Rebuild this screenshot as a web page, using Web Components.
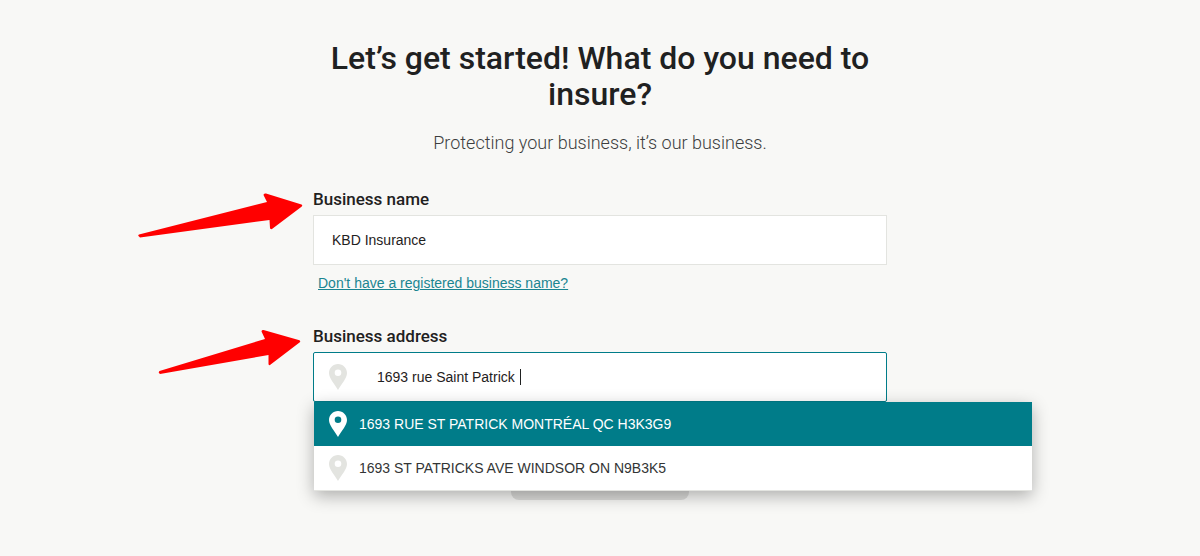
<!DOCTYPE html>
<html lang="en">
<head>
<meta charset="utf-8">
<meta name="viewport" content="width=device-width, initial-scale=1">
<title>Get started</title>
<style>
  body {
    margin: 0;
    background: #f8f8f6;
    color: #1f2121;
    font-family: Roboto, sans-serif;
  }
</style>
</head>
<body>
<quote-page></quote-page>

<script>
const pinTemplate = document.createElement('template');
pinTemplate.innerHTML = `
  <style>
    :host { display: block; flex: none; width: 18px; height: 26px; color: #e3e4e0; }
    svg { display: block; width: 100%; height: 100%; }
  </style>
  <svg viewBox="0 0 18 26" aria-hidden="true">
    <path fill="currentColor" fill-rule="evenodd" d="M9 0C4 0 0 4 0 9c0 5.500 5.500 10.500 9 17 3.500-6.500 9-11.500 9-17 0-5-4-9-9-9zm0 5.500a3.300 3.300 0 1 1 0 6.600 3.300 3.300 0 0 1 0-6.600z"/>
  </svg>
`;

class MapPin extends HTMLElement {
    constructor() {
        super();
        this.attachShadow({ mode: 'open' });
        this.shadowRoot.appendChild(pinTemplate.content.cloneNode(true));
    }
}

// red arrow that points at a field's label
class PointerArrow extends HTMLElement {
    static observedAttributes = ['shape'];

    shapes = {
        name: 'M2 45.500Q0.500 44.500 2 43.500L130 11 126.500 4Q126.500 2 129 2.500L164.500 13.500Q166 14.500 164.500 15.800L135 38Q133 38.500 133 37L132.500 29 3 46.500Z',
        address: 'M22.500 45.500Q21 44.500 22.500 43L128 11 124.500 3.500Q124.500 1.500 126.500 2L162.500 12.200Q164 13.500 162.500 14.500L133 37Q131.500 37.500 131.500 36L131.500 27 23 46Z'
    };

    constructor() {
        super();
        this.attachShadow({ mode: 'open' });
    }

    attributeChangedCallback() {
        this.shadowRoot.innerHTML = `
          <style>
            :host { display: block; width: 166px; height: 48px; }
            svg { display: block; }
          </style>
          <svg width="166" height="48" viewBox="0 0 166 48" aria-hidden="true">
            <path fill="#ff0000" d="${this.shapes[this.getAttribute('shape')]}"/>
          </svg>
        `;
    }
}

const fieldTemplate = document.createElement('template');
fieldTemplate.innerHTML = `
  <style>
    :host { display: block; position: relative; }
    label { display: block; font-size: 17px; font-weight: 500; line-height: 20px; margin-bottom: 6px; }
    .box {
      display: flex;
      align-items: center;
      box-sizing: border-box;
      height: 50px;
      padding: 0 18px;
      border: 1px solid #e3e4e0;
      background: #fff;
    }
    input {
      flex: 1;
      min-width: 0;
      padding: 0;
      border: 0;
      outline: 0;
      background: none;
      color: #1f2121;
      font: 14px/20px "Liberation Sans", Arial, sans-serif;
    }
    .caret { display: none; width: 1px; height: 16px; background: #1f2121; }
    :host([active]) .box { border-color: #007c89; border-radius: 2px; padding: 0 15px; }
    :host([active]) input { flex: none; field-sizing: content; margin-left: 30px; }
    :host([active]) .caret { display: block; margin-left: 5px; }
    pointer-arrow { position: absolute; top: 2px; right: calc(100% + 10px); }
    .menu { position: absolute; top: 100%; left: 1px; width: 125%; z-index: 1; }
  </style>
  <label for="field"></label>
  <div class="box">
    <slot name="icon"></slot>
    <input id="field" type="text" autocomplete="off">
    <span class="caret"></span>
  </div>
  <div class="menu"><slot name="menu"></slot></div>
  <pointer-arrow></pointer-arrow>
`;

class FormField extends HTMLElement {
    constructor() {
        super();
        this.attachShadow({ mode: 'open' });
        this.shadowRoot.appendChild(fieldTemplate.content.cloneNode(true));
    }

    connectedCallback() {
        this.shadowRoot.querySelector('label').textContent = this.getAttribute('label');
        this.shadowRoot.querySelector('input').value = this.getAttribute('value');
        this.shadowRoot.querySelector('pointer-arrow').setAttribute('shape', this.getAttribute('arrow'));
    }
}

const listTemplate = document.createElement('template');
listTemplate.innerHTML = `
  <style>
    :host {
      display: block;
      background: #fff;
      border-bottom: 1px solid #e3e4e0;
      box-shadow: 0 5px 16px rgba(0, 0, 0, 0.3);
    }
    button {
      display: flex;
      align-items: center;
      gap: 12px;
      width: 100%;
      height: 44px;
      padding: 0 15px;
      border: 0;
      background: #fff;
      color: #333535;
      font: 14px/20px "Liberation Sans", Arial, sans-serif;
      text-align: left;
    }
    button.selected { background: #007c89; color: #fff; }
    button.selected map-pin { color: #fff; }
  </style>
`;

class AddressList extends HTMLElement {
    addresses = [
        '1693 RUE ST PATRICK MONTRÉAL QC H3K3G9',
        '1693 ST PATRICKS AVE WINDSOR ON N9B3K5'
    ];

    constructor() {
        super();
        this.attachShadow({ mode: 'open' });
        this.shadowRoot.appendChild(listTemplate.content.cloneNode(true));
    }

    connectedCallback() {
        this.addresses.forEach((address, i) => {
            const item = document.createElement('button');
            item.type = 'button';
            item.append(document.createElement('map-pin'), address);
            item.classList.toggle('selected', i === 0);
            item.addEventListener('mouseenter', () => this.select(item));
            this.shadowRoot.appendChild(item);
        });
    }

    select(item) {
        this.shadowRoot.querySelectorAll('button').forEach(b => b.classList.toggle('selected', b === item));
    }
}

const pageTemplate = document.createElement('template');
pageTemplate.innerHTML = `
  <style>
    :host { display: block; padding: 40px 16px 56px; }
    main { display: flex; flex-direction: column; max-width: 574px; margin: 0 auto; }
    h1 { margin: 0; font-size: 32px; font-weight: 500; line-height: 36px; text-align: center; }
    p { margin: 20px 0 35px; color: #3c3e3e; font-size: 18px; font-weight: 300; line-height: 22px; text-align: center; }
    a {
      align-self: flex-start;
      margin: 8px 0 33px 5px;
      color: #1a8591;
      font: 14px/20px "Liberation Sans", Arial, sans-serif;
    }
    .submit {
      align-self: center;
      width: 178px;
      height: 48px;
      margin-top: 50px;
      border: 0;
      border-radius: 8px;
      background: #dcdcda;
    }
  </style>
  <main>
    <h1>Let’s get started! What do you need to insure?</h1>
    <p>Protecting your business, it’s our business.</p>
    <form-field label="Business name" value="KBD Insurance" arrow="name"></form-field>
    <a href="#">Don't have a registered business name?</a>
    <form-field label="Business address" value="1693 rue Saint Patrick" arrow="address" active>
      <map-pin slot="icon"></map-pin>
      <address-list slot="menu"></address-list>
    </form-field>
    <button class="submit" type="button" aria-label="Continue" disabled></button>
  </main>
`;

class QuotePage extends HTMLElement {
    constructor() {
        super();
        this.attachShadow({ mode: 'open' });
        this.shadowRoot.appendChild(pageTemplate.content.cloneNode(true));
    }
}

window.customElements.define('map-pin', MapPin);
window.customElements.define('pointer-arrow', PointerArrow);
window.customElements.define('form-field', FormField);
window.customElements.define('address-list', AddressList);
window.customElements.define('quote-page', QuotePage);
</script>
</body>
</html>
